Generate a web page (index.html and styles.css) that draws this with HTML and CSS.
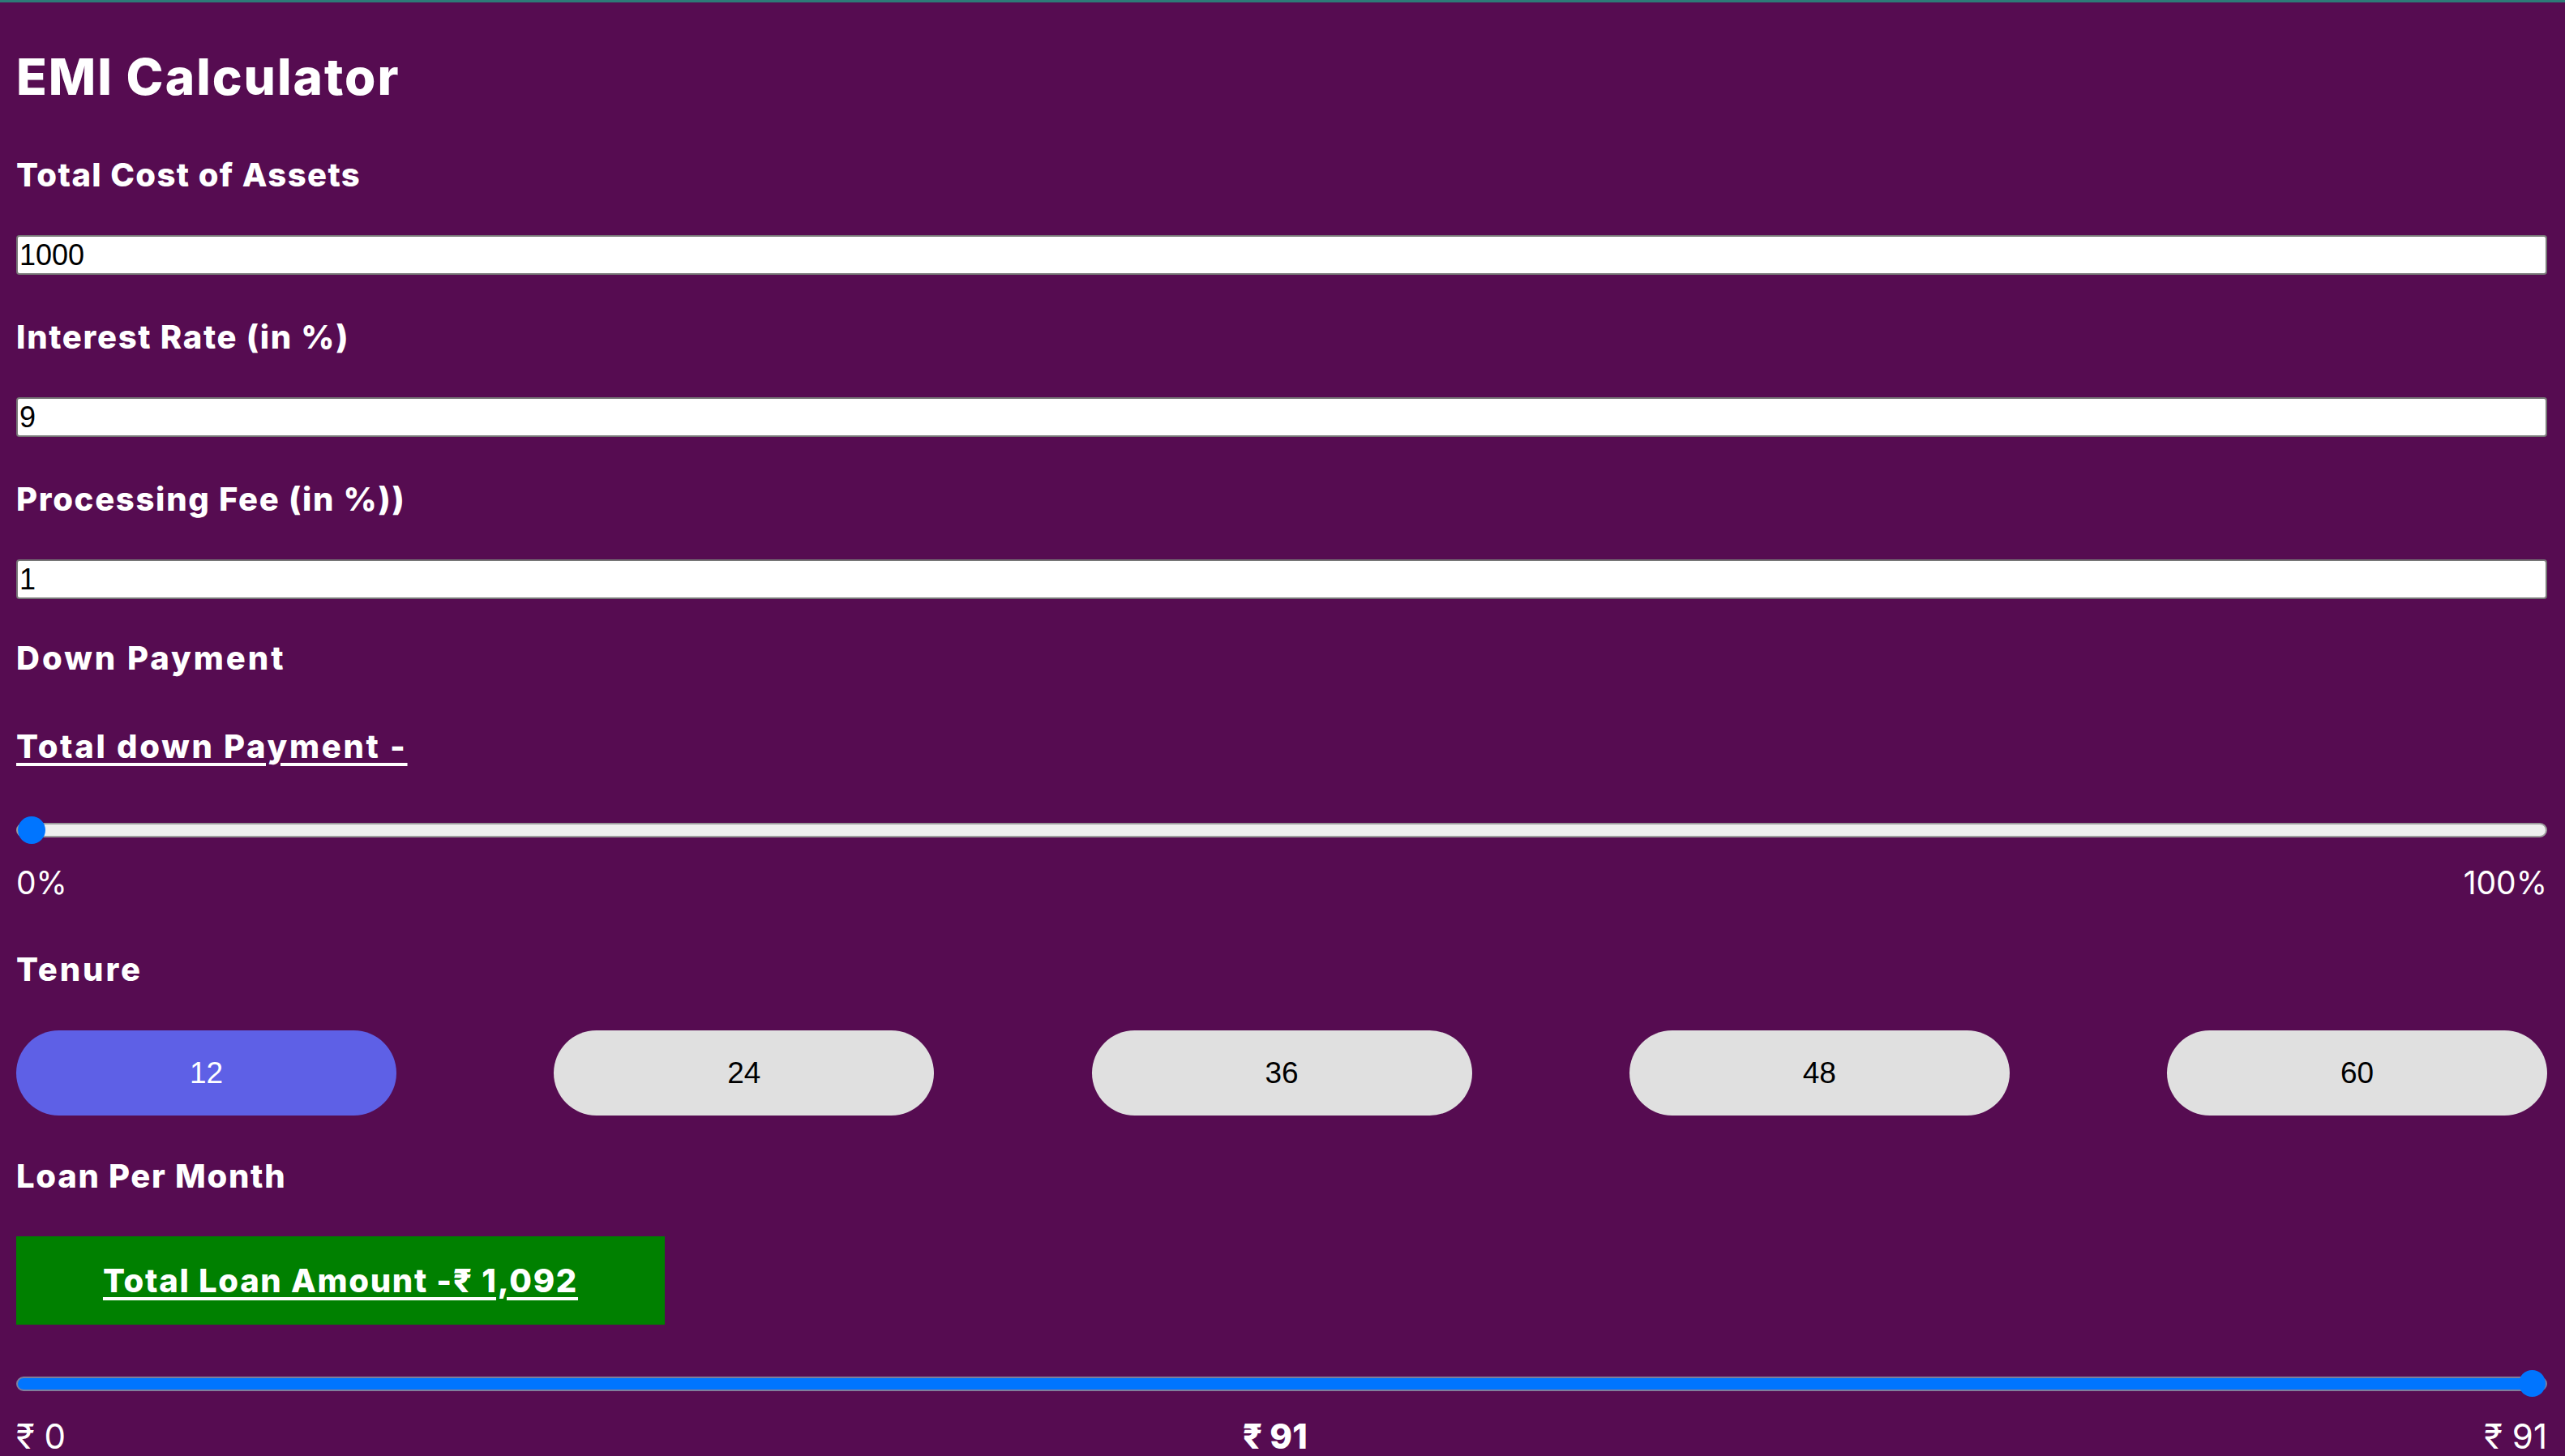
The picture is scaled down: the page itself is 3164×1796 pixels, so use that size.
FILE: index.html
```html
<!DOCTYPE html>
<html lang="en">
<head>
<meta charset="utf-8">
<title>EMI Calculator</title>
<link rel="stylesheet" href="styles.css">
</head>
<body class="page">
  <main class="calc">
    <h1 class="title">EMI Calculator</h1>

    <h3 class="label label-first">Total Cost of Assets</h3>
    <input class="text-input" type="text" value="1000">

    <h3 class="label">Interest Rate (in %)</h3>
    <input class="text-input" type="text" value="9">

    <h3 class="label">Processing Fee (in %))</h3>
    <input class="text-input" type="text" value="1">

    <h3 class="label label-down">Down Payment</h3>
    <h3 class="label label-total"><span class="underline">Total down Payment -</span></h3>

    <input class="range range-down" type="range" min="0" max="100" value="0">
    <div class="range-labels range-labels-top">
      <span>0%</span>
      <span>100%</span>
    </div>

    <h3 class="label label-tenure">Tenure</h3>
    <div class="tenure">
      <button class="tenure-btn is-active" type="button">12</button>
      <button class="tenure-btn" type="button">24</button>
      <button class="tenure-btn" type="button">36</button>
      <button class="tenure-btn" type="button">48</button>
      <button class="tenure-btn" type="button">60</button>
    </div>

    <h3 class="label label-loan">Loan Per Month</h3>
    <div class="total-box"><span class="underline">Total Loan Amount -₹ 1,092</span></div>

    <input class="range range-loan" type="range" min="0" max="91" value="91">
    <div class="range-labels range-labels-bottom">
      <span>₹ 0</span>
      <span class="strong">₹ 91</span>
      <span>₹ 91</span>
    </div>
  </main>
</body>
</html>
```

FILE: styles.css
```css
html, body {
  margin: 0;
  padding: 0;
}

.page {
  background: #560c51;
  border-top: 3px solid #2d7a78;
  color: #ffffff;
  font-family: Inter, "Open Sans", "DejaVu Sans", sans-serif;
  min-height: 1793px;
  box-sizing: border-box;
}

.calc {
  display: flex;
  flex-direction: column;
  align-items: flex-start;
  padding: 0 22px 0 20px;
}

.title {
  margin: 52px 0 0;
  font-size: 62px;
  line-height: 80px;
  font-weight: 800;
  letter-spacing: 2px;
}

.label {
  margin: 47px 0 0;
  font-size: 40px;
  line-height: 60px;
  font-weight: 800;
  letter-spacing: 1.7px;
}

.label-first { margin-top: 51px; letter-spacing: 1.4px; }
.label-down { margin-top: 43px; letter-spacing: 3px; }
.label-total { margin-top: 49px; letter-spacing: 2.7px; }
.label-tenure { margin-top: 53px; letter-spacing: 2.9px; }
.label-loan { margin-top: 45px; }

.underline {
  text-decoration: underline;
  text-decoration-thickness: 4px;
  text-underline-offset: 6px;
}

.text-input {
  box-sizing: border-box;
  width: 100%;
  height: 49px;
  margin: 44px 0 0;
  padding: 0 2px;
  border: 2px solid #767676;
  border-radius: 4px;
  background: #ffffff;
  color: #000000;
  font-family: "Liberation Sans", Arial, sans-serif;
  font-size: 36px;
  outline: none;
}

.range {
  -webkit-appearance: none;
  appearance: none;
  width: 100%;
  height: 34px;
  margin: 56px 0 0;
  padding: 0;
  background: transparent;
}

.range::-webkit-slider-runnable-track {
  box-sizing: border-box;
  height: 18px;
  border-radius: 9px;
  border: 2px solid #9c9c9c;
  background: #efefef;
}

.range::-webkit-slider-thumb {
  -webkit-appearance: none;
  appearance: none;
  width: 34px;
  height: 34px;
  margin-top: -10px;
  border-radius: 50%;
  background: #0075ff;
  border: none;
}

.range-loan::-webkit-slider-runnable-track {
  background: #0075ff;
  border-color: #7f7f9c;
}

.range-loan {
  height: 33px;
}

.range-loan::-webkit-slider-thumb {
  width: 33px;
  height: 33px;
  margin-top: -9.5px;
}

.range-labels {
  align-self: stretch;
  display: flex;
  justify-content: space-between;
  font-size: 39px;
  line-height: 48px;
  font-weight: 400;
}

.range-labels-top { margin-top: 24px; }
.range-labels-bottom {
  margin-top: 25px;
  font-size: 42px;
}

.strong { font-weight: 800; }

.tenure {
  align-self: stretch;
  display: flex;
  justify-content: space-between;
  margin-top: 45px;
}

.tenure-btn {
  width: 469px;
  height: 105px;
  border: none;
  border-radius: 53px;
  background: #e0e0e0;
  color: #000000;
  font-family: "Liberation Sans", Arial, sans-serif;
  font-size: 37px;
  padding: 0;
}

.tenure-btn.is-active {
  background: #5e60e6;
  color: #ffffff;
}

.total-box {
  box-sizing: border-box;
  width: 800px;
  height: 109px;
  margin-top: 44px;
  display: flex;
  align-items: center;
  justify-content: center;
  background: #008000;
  font-size: 40px;
  font-weight: 800;
  letter-spacing: 1.7px;
}
```
